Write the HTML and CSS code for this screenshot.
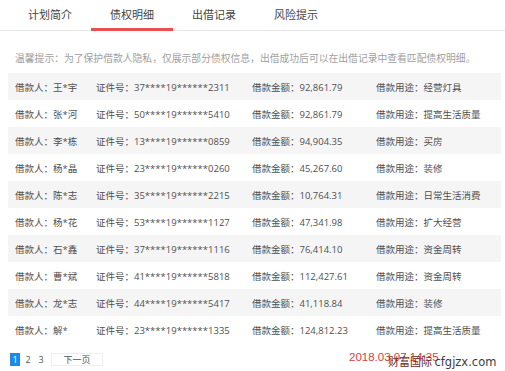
FILE: index.html
```html
<!DOCTYPE html>
<html lang="zh">
<head>
<meta charset="utf-8">
<link rel="stylesheet" href="styles.css">
</head>
<body>
<div class="page">
  <nav class="tabs">
    <div class="tab">计划简介</div>
    <div class="tab active">债权明细</div>
    <div class="tab">出借记录</div>
    <div class="tab">风险提示</div>
  </nav>
  <p class="tip">温馨提示：为了保护借款人隐私，仅展示部分债权信息，出借成功后可以在出借记录中查看匹配债权明细。</p>
  <div class="list">
    <div class="row"><span>借款人：王*宇</span><span>证件号：37****19******2311</span><span>借款金额：92,861.79</span><span>借款用途：经营灯具</span></div>
    <div class="row"><span>借款人：张*河</span><span>证件号：50****19******5410</span><span>借款金额：92,861.79</span><span>借款用途：提高生活质量</span></div>
    <div class="row"><span>借款人：李*栋</span><span>证件号：13****19******0859</span><span>借款金额：94,904.35</span><span>借款用途：买房</span></div>
    <div class="row"><span>借款人：杨*晶</span><span>证件号：23****19******0260</span><span>借款金额：45,267.60</span><span>借款用途：装修</span></div>
    <div class="row"><span>借款人：陈*志</span><span>证件号：35****19******2215</span><span>借款金额：10,764.31</span><span>借款用途：日常生活消费</span></div>
    <div class="row"><span>借款人：杨*花</span><span>证件号：53****19******1127</span><span>借款金额：47,341.98</span><span>借款用途：扩大经营</span></div>
    <div class="row"><span>借款人：石*鑫</span><span>证件号：37****19******1116</span><span>借款金额：76,414.10</span><span>借款用途：资金周转</span></div>
    <div class="row"><span>借款人：曹*斌</span><span>证件号：41****19******5818</span><span>借款金额：112,427.61</span><span>借款用途：资金周转</span></div>
    <div class="row"><span>借款人：龙*志</span><span>证件号：44****19******5417</span><span>借款金额：41,118.84</span><span>借款用途：装修</span></div>
    <div class="row"><span>借款人：解*</span><span>证件号：23****19******1335</span><span>借款金额：124,812.23</span><span>借款用途：提高生活质量</span></div>
  </div>
  <div class="pager">
    <span class="pg current">1</span>
    <span class="pg">2</span>
    <span class="pg">3</span>
    <span class="next">下一页</span>
  </div>
  <div class="watermark">
    <span class="stamp">2018.03.07 14:35</span>
    <span class="brand">财富国际 <span class="domain">cfgjzx.com</span></span>
  </div>
</div>
</body>
</html>
```
FILE: styles.css
```css
* { box-sizing: border-box; }
html, body { margin: 0; padding: 0; background: #fff; }
body {
  font-family: "Noto Sans CJK SC", "Microsoft YaHei", sans-serif;
  color: #333;
  width: 505px;
  height: 371px;
  overflow: hidden;
}
.page { position: relative; width: 505px; height: 371px; overflow: hidden; }
.tabs {
  display: flex;
  height: 31px;
  padding-left: 9px;
  border-bottom: 1px solid #e8e8e8;
}
.tab {
  width: 82px;
  text-align: center;
  font-size: 11px;
  line-height: 28px;
  color: #444;
}
.tab.active {
  border-bottom: 3px solid #e9504f;
  height: 31px;
}
.tip {
  margin: 20px 0 0 15px;
  font-size: 9.8px;
  line-height: 14px;
  color: #a0a0a0;
  white-space: nowrap;
}
.list { margin: 8px 4px 0 8px; }
.row {
  display: grid;
  grid-template-columns: 81px 156px 124px 1fr;
  height: 27px;
  align-items: center;
  padding-left: 7px;
  font-family: "Open Sans", "Noto Sans CJK SC", sans-serif;
  font-size: 9.5px;
  color: #505050;
  white-space: nowrap;
}
.row:nth-child(odd) { background: #f5f5f5; }
.pager {
  display: flex;
  align-items: center;
  margin: 10px 0 0 10px;
  height: 13px;
  font-family: "Open Sans", "Noto Sans CJK SC", sans-serif;
  font-size: 9px;
  color: #555;
}
.pg {
  width: 10px;
  height: 13px;
  line-height: 13px;
  text-align: center;
  margin-right: 3px;
}
.pg.current { background: #1a8ce8; color: #fff; }
.next {
  margin-left: 2px;
  width: 52px;
  height: 13px;
  line-height: 12px;
  text-align: center;
  border: 1px solid #eee;
}
.watermark {
  position: absolute;
  left: 348px;
  top: 348px;
  width: 157px;
  height: 23px;
  white-space: nowrap;
}
.stamp {
  position: absolute;
  left: 1px;
  top: 2px;
  font-family: "Liberation Sans", sans-serif;
  font-size: 11.5px;
  line-height: 14px;
  color: #d9413f;
}
.brand {
  position: absolute;
  left: 40px;
  top: 6px;
  font-size: 11px;
  line-height: 15px;
  color: #6a2b2b;
}
.domain {
  color: #3c3c3c;
  font-family: "DejaVu Sans", sans-serif;
  font-size: 11.5px;
}
```
